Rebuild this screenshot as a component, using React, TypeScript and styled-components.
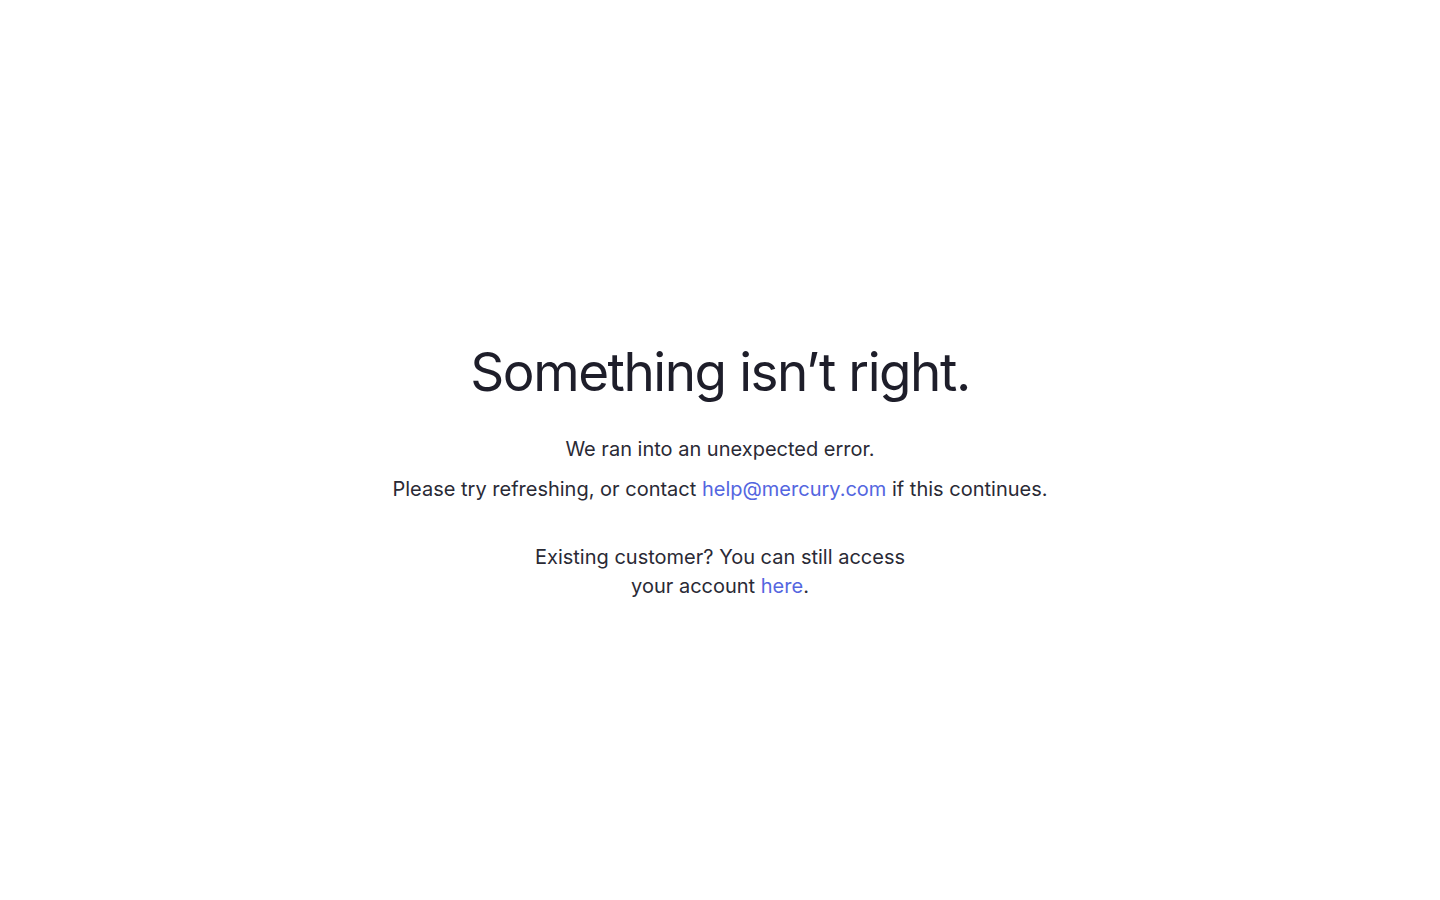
import React from 'react';
import styled, { createGlobalStyle } from 'styled-components';

const GlobalStyle = createGlobalStyle`
  html, body {
    margin: 0;
    padding: 0;
    background: #ffffff;
  }
  body {
    font-family: Inter, "Noto Sans", sans-serif;
    color: #1e1e2a;
    -webkit-font-smoothing: antialiased;
  }
`;

const Page = styled.main`
  min-height: 900px;
  display: flex;
  flex-direction: column;
  align-items: center;
  padding-top: 340px;
  box-sizing: border-box;
  text-align: center;
`;

const Title = styled.h1`
  margin: 0 0 30px;
  font-size: 53px;
  line-height: 64px;
  font-weight: 400;
  letter-spacing: -1.45px;
  color: #1e1e2a;
`;

const Text = styled.p<{ gap?: number }>`
  margin: 0 0 ${props => props.gap ?? 0}px;
  font-size: 20px;
  line-height: 30px;
  font-weight: 400;
  color: #2a2a35;
`;

const Note = styled.p`
  margin: 39px 0 0;
  max-width: 380px;
  font-size: 20px;
  line-height: 29px;
  color: #2a2a35;
`;

const Link = styled.a`
  color: #5466e0;
  text-decoration: none;
`;

const App = () => {
  return (
    <>
      <GlobalStyle />
      <Page>
        <Title>Something isn’t right.</Title>
        <Text gap={10}>We ran into an unexpected error.</Text>
        <Text>
          Please try refreshing, or contact <Link href="#">help@mercury.com</Link> if this continues.
        </Text>
        <Note>
          Existing customer? You can still access your account <Link href="#">here</Link>.
        </Note>
      </Page>
    </>
  );
};

export default App;
